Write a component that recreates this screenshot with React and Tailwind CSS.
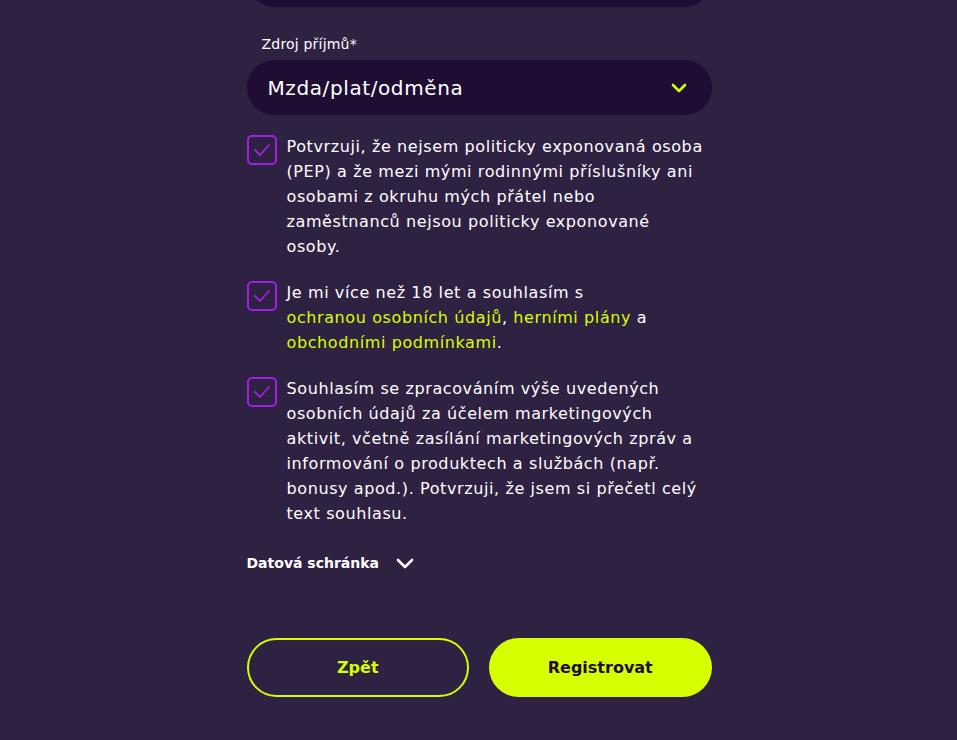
const lime = "text-[#d6ff00]";

export default function App() {
  return (
    <div className="min-h-screen w-full bg-[#2f2142] overflow-hidden pl-px font-['DejaVu_Sans','Noto_Sans',sans-serif] text-white">
      <div className="mx-auto w-[465px]">
        {/* previous field (cut off) */}
        <div className="mt-[-48px] h-[55px] rounded-full bg-[#1f0d33]" />

        {/* income source */}
        <label className="mt-[27px] block pl-[15px] text-[14px] leading-[20px] tracking-[0.2px] text-white">
          Zdroj příjmů*
        </label>
        <div className="mt-[6px] flex h-[55px] items-center justify-between rounded-full bg-[#1f0d33] pl-[21px] pr-[25px]">
          <span className="text-[20px] tracking-[0.6px]">Mzda/plat/odměna</span>
          <svg width="16" height="10" viewBox="0 0 16 10" fill="none">
            <path d="M2 2l6 6 6-6" stroke="#d6ff00" strokeWidth="2.6" strokeLinecap="round" strokeLinejoin="round" />
          </svg>
        </div>

        {/* consents */}
        <div className="mt-[19px] flex flex-col gap-[21px]">
          <Consent>
            Potvrzuji, že nejsem politicky exponovaná osoba
            <br />
            (PEP) a že mezi mými rodinnými příslušníky ani
            <br />
            osobami z okruhu mých přátel nebo
            <br />
            zaměstnanců nejsou politicky exponované
            <br />
            osoby.
          </Consent>
          <Consent>
            Je mi více než 18 let a souhlasím s
            <br />
            <span className={lime}>ochranou osobních údajů</span>, <span className={lime}>herními plány</span> a
            <br />
            <span className={lime}>obchodními podmínkami</span>.
          </Consent>
          <Consent>
            Souhlasím se zpracováním výše uvedených
            <br />
            osobních údajů za účelem marketingových
            <br />
            aktivit, včetně zasílání marketingových zpráv a
            <br />
            informování o produktech a službách (např.
            <br />
            bonusy apod.). Potvrzuji, že jsem si přečetl celý
            <br />
            text souhlasu.
          </Consent>
        </div>

        {/* data box toggle */}
        <button className="mt-[27px] flex items-center gap-[17px] text-[14px] font-bold leading-[20px] text-white">
          Datová schránka
          <svg width="18" height="12" viewBox="0 0 18 12" fill="none">
            <path d="M2 3l7 7 7-7" stroke="#ffffff" strokeWidth="2.6" strokeLinecap="round" strokeLinejoin="round" />
          </svg>
        </button>

        {/* actions */}
        <div className="mt-[65px] grid grid-cols-2 gap-[20px]">
          <button className="h-[59px] rounded-full border-2 border-[#d6ff00] text-[16px] font-bold text-[#d6ff00]">
            Zpět
          </button>
          <button className="h-[59px] rounded-full bg-[#d6ff00] text-[16px] font-bold text-[#1f0d33]">
            Registrovat
          </button>
        </div>
      </div>
    </div>
  );
}

function Consent({ children }) {
  return (
    <div className="flex items-start gap-[10px]">
      <div className="mt-px flex h-[30px] w-[30px] shrink-0 items-center justify-center rounded-[5px] border-2 border-[#a01fe6]">
        <svg width="20" height="16" viewBox="0 0 20 16" fill="none">
          <path d="M3 8l5 5 9-10" stroke="#a01fe6" strokeWidth="1.8" strokeLinecap="round" strokeLinejoin="round" />
        </svg>
      </div>
      <p className="whitespace-nowrap text-[16px] leading-[25px] tracking-[0.6px] text-white">{children}</p>
    </div>
  );
}
